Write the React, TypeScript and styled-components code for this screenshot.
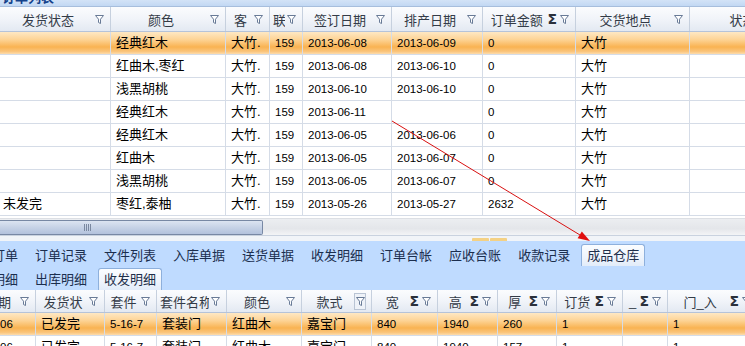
import * as React from "react";
import styled, { createGlobalStyle, css } from "styled-components";

const GlobalStyle = createGlobalStyle`
  html, body {
    margin: 0;
    padding: 0;
    background: #ffffff;
    overflow: hidden;
  }
`;

const FONT = `"Liberation Sans", "Noto Sans CJK SC", sans-serif`;

type Col = { title: string; w: number; num?: boolean; sum?: boolean; hot?: boolean };

const topCols: Col[] = [
  { title: "发货状态", w: 111 },
  { title: "颜色", w: 115 },
  { title: "客", w: 44 },
  { title: "联", w: 33, num: true },
  { title: "签订日期", w: 89, num: true },
  { title: "排产日期", w: 91, num: true },
  { title: "订单金额", w: 93, num: true, sum: true },
  { title: "交货地点", w: 114 },
  { title: "状态", w: 120 },
];

const topRows: string[][] = [
  ["", "经典红木", "大竹.", "159", "2013-06-08", "2013-06-09", "0", "大竹", ""],
  ["", "红曲木,枣红", "大竹.", "159", "2013-06-08", "2013-06-10", "0", "大竹", ""],
  ["", "浅黑胡桃", "大竹.", "159", "2013-06-10", "2013-06-10", "0", "大竹", ""],
  ["", "经典红木", "大竹.", "159", "2013-06-11", "", "0", "大竹", ""],
  ["", "经典红木", "大竹.", "159", "2013-06-05", "2013-06-06", "0", "大竹", ""],
  ["", "红曲木", "大竹.", "159", "2013-06-05", "2013-06-07", "0", "大竹", ""],
  ["", "浅黑胡桃", "大竹.", "159", "2013-06-05", "2013-06-07", "0", "大竹", ""],
  ["未发完", "枣红,泰柚", "大竹.", "159", "2013-05-26", "2013-05-27", "2632", "大竹", ""],
];

const bottomCols: Col[] = [
  { title: "发货日期", w: 87, num: true },
  { title: "发货状", w: 69 },
  { title: "套件", w: 52, num: true },
  { title: "套件名称", w: 70 },
  { title: "颜色", w: 75 },
  { title: "款式", w: 70, hot: true },
  { title: "宽", w: 66, num: true, sum: true },
  { title: "高", w: 60, num: true, sum: true },
  { title: "厚", w: 59, num: true, sum: true },
  { title: "订货", w: 66, num: true, sum: true },
  { title: "_", w: 45, num: true, sum: true },
  { title: "门_入", w: 90, num: true, sum: true },
];

const bottomRows: string[][] = [
  ["2013-06-06", "已发完", "5-16-7", "套装门", "红曲木", "嘉宝门", "840", "1940", "260", "1", "", "1"],
  ["2013-06-06", "已发完", "5-16-7", "套装门", "红曲木", "嘉宝门", "840", "1940", "157", "1", "", "1"],
];

const topTabs = ["订单", "订单记录", "文件列表", "入库单据", "送货单据", "收发明细", "订单台帐", "应收台账", "收款记录", "成品仓库"];
const subTabs = ["明细", "出库明细", "收发明细"];

const Root = styled.div`
  position: relative;
  width: 745px;
  height: 346px;
  overflow: hidden;
  display: flex;
  flex-direction: column;
  font-family: ${FONT};
  background: #ffffff;
`;

const Caption = styled.div`
  height: 7px;
  flex: none;
  overflow: hidden;
  background: linear-gradient(#d3e3f7, #c2d8f3);
  border-bottom: 1px solid #a7bedd;
  box-sizing: border-box;
  span {
    display: block;
    margin-top: -10px;
    padding-left: 2px;
    font-size: 13px;
    line-height: 16px;
    font-weight: bold;
    color: #15428b;
  }
`;

const Row = styled.div<{ $offset?: number; $height: number; $selected?: boolean }>`
  display: flex;
  flex: none;
  height: ${(p) => p.$height}px;
  margin-left: ${(p) => p.$offset || 0}px;
  box-sizing: border-box;
  border-bottom: 1px solid #d5dce7;
  background: #ffffff;
  ${(p) =>
    p.$selected &&
    css`
      background: linear-gradient(
        to bottom,
        #fee8c4 0%,
        #fdd394 35%,
        #f9b352 68%,
        #fac47a 88%,
        #fddcad 100%
      );
    `}
`;

const HeaderRow = styled(Row)`
  background: linear-gradient(to bottom, #fbfcfe 0%, #f1f4f9 50%, #e3e9f2 100%);
  border-bottom: 1px solid #b5c3d8;
`;

const HeadCell = styled.div<{ $w: number }>`
  width: ${(p) => p.$w}px;
  flex: none;
  box-sizing: border-box;
  display: flex;
  align-items: center;
  padding: 0 5px 0 3px;
  border-right: 1px solid #c6d0de;
  font-size: 13px;
  color: #333b47;
  white-space: nowrap;
  overflow: hidden;
`;

const HeadTitle = styled.span`
  flex: 1;
  text-align: center;
  overflow: hidden;
`;

const Sigma = styled.span`
  flex: none;
  font-family: "DejaVu Sans", sans-serif;
  font-weight: bold;
  font-size: 14px;
  line-height: 14px;
  color: #2a303b;
  margin-right: 1px;
`;

const FilterBox = styled.span<{ $hot?: boolean }>`
  flex: none;
  display: flex;
  align-items: center;
  justify-content: center;
  width: 12px;
  height: 17px;
  box-sizing: border-box;
  ${(p) =>
    p.$hot &&
    css`
      border: 1px solid #b9c4d4;
      background: #eef2f8;
    `}
`;

const Cell = styled.div<{ $w: number; $num?: boolean }>`
  width: ${(p) => p.$w}px;
  flex: none;
  box-sizing: border-box;
  padding-left: 5px;
  border-right: 1px solid #d5dce7;
  font-size: ${(p) => (p.$num ? "11.5px" : "13px")};
  line-height: 22px;
  color: #000000;
  white-space: nowrap;
  overflow: hidden;
`;

const FirstCell = styled(Cell)`
  padding-left: 3px;
`;

const GridFill = styled.div`
  height: 2px;
  flex: none;
  background: #ffffff;
`;

const ScrollTrack = styled.div`
  height: 17px;
  flex: none;
  box-sizing: border-box;
  background: linear-gradient(to bottom, #eceef1 0%, #e4e6ea 60%, #f3f4f6 100%);
  border-top: 1px solid #dcdfe4;
  display: flex;
  align-items: center;
`;

const ScrollThumb = styled.div`
  width: 263px;
  height: 15px;
  box-sizing: border-box;
  border: 1px solid #7888a4;
  border-left: none;
  border-radius: 0 2px 2px 0;
  background: linear-gradient(to bottom, #dce4f1 0%, #c6d2e6 50%, #b3c2dc 100%);
  display: flex;
  align-items: center;
  justify-content: center;
  padding-right: 88px;
`;

const Grip = styled.span`
  width: 7px;
  height: 7px;
  background: repeating-linear-gradient(
    to right,
    #7a88a0 0px,
    #7a88a0 1px,
    transparent 1px,
    transparent 2px
  );
`;

const Splitter = styled.div`
  height: 6px;
  flex: none;
  box-sizing: border-box;
  border-top: 1px solid #c9d2df;
  background: #f1f4f8;
  display: flex;
  justify-content: center;
  align-items: flex-end;
  padding-left: 234px;
`;

const SplitGrip = styled.span`
  width: 17px;
  height: 3px;
  margin-right: 1px;
  background: #f4d184;
  border-radius: 1px 1px 0 0;
`;

const TabStrip = styled.div<{ $height: number }>`
  height: ${(p) => p.$height}px;
  flex: none;
  display: flex;
  align-items: flex-end;
  background: #bfdbff;
  margin-left: -14px;
  overflow: hidden;
`;

const Tab = styled.div<{ $active?: boolean }>`
  flex: none;
  height: 22px;
  box-sizing: border-box;
  padding: 0 5px;
  margin-right: 5px;
  font-size: 13px;
  line-height: 21px;
  color: #1b2e4e;
  white-space: nowrap;
  border: 1px solid transparent;
  border-bottom: none;
  border-radius: 3px 3px 0 0;
  ${(p) =>
    p.$active &&
    css`
      background: linear-gradient(to bottom, #fbfdff 0%, #eef4fc 60%, #e2ecf9 100%);
      border-color: #8eb0dc;
      color: #1e2f4a;
    `}
`;

const Overlay = styled.svg`
  position: absolute;
  left: 0;
  top: 0;
  pointer-events: none;
`;

function Funnel() {
  return (
    <svg width="9" height="9" viewBox="0 0 9 9">
      <path
        d="M0.5 0.5 H8.5 L5.5 4.2 V8.5 L3.5 7.5 V4.2 Z"
        fill="#ffffff"
        stroke="#687a96"
        strokeWidth="1"
        strokeLinejoin="round"
      />
    </svg>
  );
}

function GridHeader({ cols, height, offset }: { cols: Col[]; height: number; offset?: number }) {
  return (
    <HeaderRow $height={height} $offset={offset}>
      {cols.map((c, i) => (
        <HeadCell key={i} $w={c.w}>
          <HeadTitle>{c.title}</HeadTitle>
          {c.sum && <Sigma>Σ</Sigma>}
          <FilterBox $hot={c.hot}>
            <Funnel />
          </FilterBox>
        </HeadCell>
      ))}
    </HeaderRow>
  );
}

function GridRows({ cols, rows, offset }: { cols: Col[]; rows: string[][]; offset?: number }) {
  return (
    <>
      {rows.map((r, ri) => (
        <Row key={ri} $height={23} $offset={offset} $selected={ri === 0}>
          {cols.map((c, ci) =>
            ci === 0 && !offset ? (
              <FirstCell key={ci} $w={c.w} $num={c.num}>
                {r[ci]}
              </FirstCell>
            ) : (
              <Cell key={ci} $w={c.w} $num={c.num}>
                {r[ci]}
              </Cell>
            )
          )}
        </Row>
      ))}
    </>
  );
}

export default function App() {
  return (
    <Root>
      <GlobalStyle />
      <Caption>
        <span>订单列表</span>
      </Caption>
      <GridHeader cols={topCols} height={25} />
      <GridRows cols={topCols} rows={topRows} />
      <GridFill />
      <ScrollTrack>
        <ScrollThumb>
          <Grip />
        </ScrollThumb>
      </ScrollTrack>
      <Splitter>
        <SplitGrip />
        <SplitGrip />
      </Splitter>
      <TabStrip $height={25}>
        {topTabs.map((t, i) => (
          <Tab key={i} $active={i === topTabs.length - 1}>
            {t}
          </Tab>
        ))}
      </TabStrip>
      <TabStrip $height={24}>
        {subTabs.map((t, i) => (
          <Tab key={i} $active={i === subTabs.length - 1}>
            {t}
          </Tab>
        ))}
      </TabStrip>
      <GridHeader cols={bottomCols} height={23} offset={-51} />
      <GridRows cols={bottomCols} rows={bottomRows} offset={-51} />

      {/* red annotation arrow */}
      <Overlay width="745" height="346">
        <line x1="392" y1="121" x2="580" y2="235" stroke="#d81010" strokeWidth="1" />
        <polygon points="590,241 577.6,238.2 581.8,231.4" fill="#e01010" />
      </Overlay>
    </Root>
  );
}
